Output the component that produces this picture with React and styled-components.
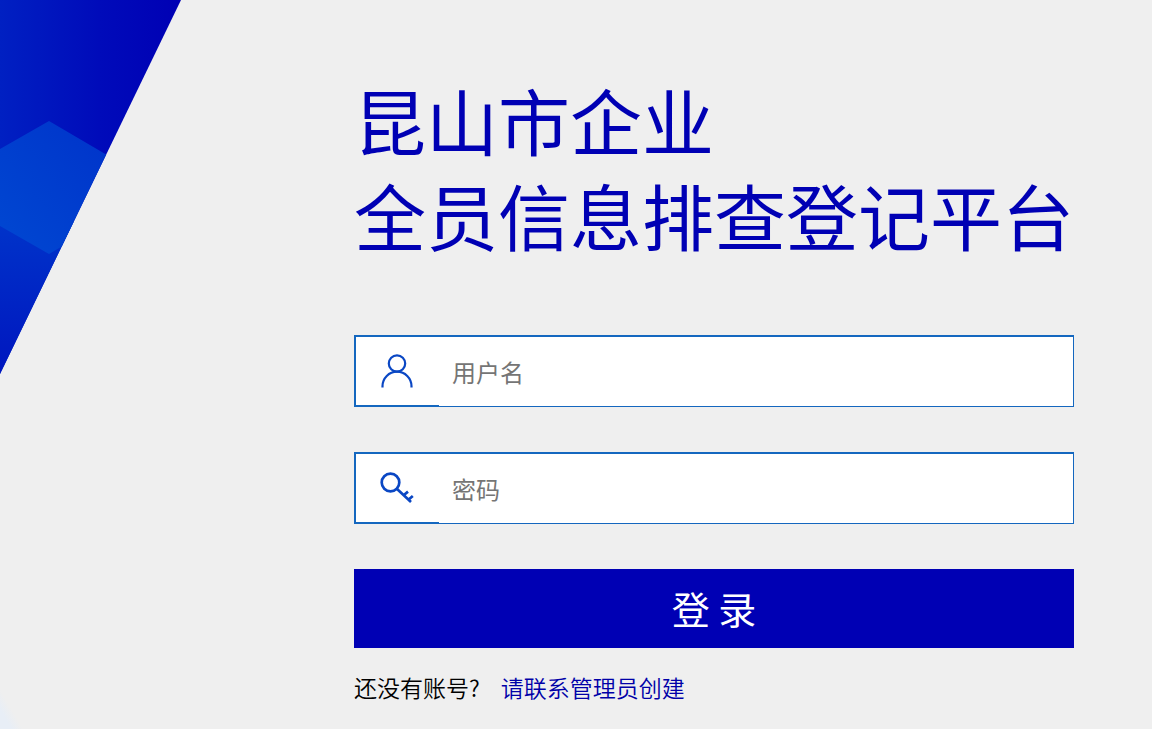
// App.jsx

import React, { useState } from 'react';
import styled, { createGlobalStyle } from 'styled-components';

const GlobalStyle = createGlobalStyle`
  * {
    box-sizing: border-box;
  }

  body {
    margin: 0;
    background-color: #efefef;
    font-family: "Noto Sans CJK SC", sans-serif;
  }
`;

const Page = styled.div`
  display: grid;
  grid-template-columns: 354px 1fr;
  min-height: 100vh;
  background: linear-gradient(60deg, #e8eef6 10px, #efefef 20px);
`;

const Artwork = styled.svg`
  display: block;
  width: 181px;
  height: 374px;
`;

const Content = styled.main`
  padding: 71px 78px 16px 0;
`;

const Title = styled.h1`
  margin: 0;
  color: #0000b4;
  font-size: 72px;
  font-weight: 400;
  line-height: 95px;
`;

const Form = styled.form`
  display: flex;
  flex-direction: column;
  gap: 45px;
  margin-top: 74px;
`;

const Field = styled.div`
  display: flex;
  height: 72px;
`;

const IconLabel = styled.label`
  display: flex;
  align-items: center;
  justify-content: center;
  width: 85px;
  padding-right: 2px;
  background-color: #fff;
  border: 2px solid #1467bf;
  border-right: 0;
`;

const Input = styled.input`
  flex: 1;
  min-width: 0;
  padding: 0 13px;
  background-color: #fff;
  border: 1px solid #1467bf;
  border-top-width: 2px;
  border-left: 0;
  border-radius: 0;
  outline: none;
  color: #000;
  font-family: inherit;
  font-size: 24px;

  &::placeholder {
    color: #757575;
  }
`;

const LoginButton = styled.button`
  height: 79px;
  padding: 0 0 2px;
  background-color: #0000b4;
  border: 0;
  color: #fff;
  cursor: pointer;
  font-family: inherit;
  font-size: 38px;
`;

const Footer = styled.p`
  display: flex;
  gap: 21px;
  margin: 22px 0 0;
  color: #000;
  font-size: 23px;
  font-weight: 350;
  line-height: 34px;
`;

const FooterLink = styled.a`
  color: #0000a8;
  text-decoration: none;
`;

const UserIcon = () => (
  <svg width="34" height="34" viewBox="0 0 34 34" fill="none" stroke="#0a47c4" strokeWidth="2.2" aria-hidden="true">
    <circle cx="17" cy="9.5" r="8.2" />
    <path d="M2.5 33.5v-1.3a14.5 14.5 0 0 1 29 0v1.3" />
  </svg>
);

const KeyIcon = () => (
  <svg width="34" height="34" viewBox="0 0 34 34" fill="none" stroke="#0a47c4" strokeWidth="2.7" aria-hidden="true">
    <circle cx="10.5" cy="11.5" r="8.8" />
    <path d="M16.8 17.8L31 31M23.6 24.3L28 20.6M28.4 28.7L32.8 24.9" />
  </svg>
);

const Decoration = () => (
  <Artwork viewBox="0 0 181 374" aria-hidden="true">
    <defs>
      <linearGradient id="base" x1="0" y1="0" x2="1" y2="0">
        <stop offset="0" stopColor="#0020c2" />
        <stop offset="0.55" stopColor="#000bba" />
        <stop offset="1" stopColor="#0000b4" />
      </linearGradient>
      <linearGradient id="hexagon" x1="1" y1="0" x2="0" y2="1">
        <stop offset="0" stopColor="#0033ca" />
        <stop offset="1" stopColor="#0048d2" />
      </linearGradient>
      <linearGradient id="lower" x1="0" y1="0" x2="0" y2="1">
        <stop offset="0" stopColor="#0034ca" />
        <stop offset="1" stopColor="#0016bf" />
      </linearGradient>
      <clipPath id="corner">
        <path d="M0 0H181L0 374Z" />
      </clipPath>
    </defs>
    <g clipPath="url(#corner)">
      <path fill="url(#base)" d="M0 0H181V374H0Z" />
      <path fill="url(#lower)" d="M0 224H49L108 219V374H0Z" />
      <path fill="url(#hexagon)" d="M49 121L107 155V220L49 254L0 226V149Z" />
    </g>
  </Artwork>
);

const App = () => {
  const [username, setUsername] = useState('');
  const [password, setPassword] = useState('');

  return (
    <>
      <GlobalStyle />
      <Page>
        <Decoration />
        <Content>
          <Title>
            昆山市企业
            <br />
            全员信息排查登记平台
          </Title>
          <Form onSubmit={(e) => e.preventDefault()}>
            <Field>
              <IconLabel htmlFor="username" aria-label="用户名">
                <UserIcon />
              </IconLabel>
              <Input
                id="username"
                type="text"
                placeholder="用户名"
                value={username}
                onChange={(e) => setUsername(e.target.value)}
              />
            </Field>
            <Field>
              <IconLabel htmlFor="password" aria-label="密码">
                <KeyIcon />
              </IconLabel>
              <Input
                id="password"
                type="password"
                placeholder="密码"
                value={password}
                onChange={(e) => setPassword(e.target.value)}
              />
            </Field>
            <LoginButton type="submit">登 录</LoginButton>
          </Form>
          <Footer>
            <span>还没有账号?</span>
            <FooterLink href="#contact">请联系管理员创建</FooterLink>
          </Footer>
        </Content>
      </Page>
    </>
  );
};

export default App;
